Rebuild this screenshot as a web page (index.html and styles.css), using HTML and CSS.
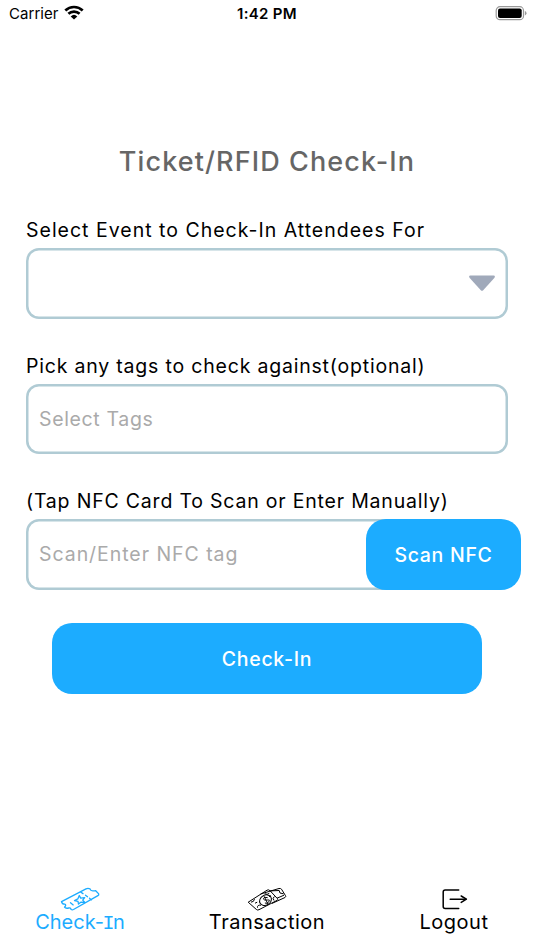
FILE: index.html
```html
<!DOCTYPE html>
<html lang="en">
<head>
<meta charset="utf-8">
<title>Ticket/RFID Check-In</title>
<link rel="stylesheet" href="styles.css">
</head>
<body>
<div class="screen">
  <header class="status">
    <div class="carrier"><span>Carrier</span>
      <svg width="20" height="15" viewBox="0 0 20 15" fill="none" stroke="#000" stroke-width="2.7"><path d="M1.3 5.5a12.6 12.6 0 0 1 17.4 0M4.4 8.8a8.1 8.1 0 0 1 11.2 0"/><path d="M10 14.6 6.7 11.4a4.8 4.8 0 0 1 6.6 0z" fill="#000" stroke="none"/></svg>
    </div>
    <div class="clock">1:42 PM</div>
    <svg class="battery" width="32" height="15" viewBox="0 0 32 15"><rect x="1.2" y=".7" width="27.3" height="13" rx="3.8" fill="none" stroke="#999" stroke-width="1.2"/><rect x="3" y="2.5" width="23.7" height="9.4" rx="2"/><path d="M29.9 5v4.4q1.6-.6 1.6-2.2T29.9 5" fill="#999"/></svg>
  </header>
  <main class="form">
    <h1><span class="title">Ticket/RFID Check-In</span></h1>
    <section class="field">
      <label><span class="l1">Select Event to Check-In Attendees For</span></label>
      <div class="box select"><svg width="28" height="18" viewBox="0 0 28 18"><path d="M2.3 1.5h23.4q2 .4.6 2.4L15.2 16.3q-1.2 1-2.4 0L1.7 3.9Q.3 1.9 2.3 1.5" fill="#a0a9ba"/></svg></div>
    </section>
    <section class="field">
      <label><span class="l2">Pick any tags to check against(optional)</span></label>
      <div class="box"><span class="p1">Select Tags</span></div>
    </section>
    <section class="field">
      <label><span class="l3">(Tap NFC Card To Scan or Enter Manually)</span></label>
      <div class="scan-row">
        <div class="box"><span class="p2">Scan/Enter NFC tag</span></div>
        <button class="scan"><span>Scan NFC</span></button>
      </div>
    </section>
    <button class="submit"><span>Check-In</span></button>
  </main>
  <nav class="tabs">
    <a class="tab active">
      <svg width="40" height="24" viewBox="0 -.7 40 24" fill="none" stroke="currentColor" stroke-width="1.3" stroke-linejoin="round" stroke-linecap="round"><path d="M1.5 14 26 1.2q2-1 4 0 .5 2 2.7 2t3-.2l3 3.2q.4 1-.8 1.7L13.5 21.8q-1.2.6-2.4 0-.5-2-2.4-1.5-3 .8-4.2-.8 2.2-2.2.3-3-2.5.2-3.3-2.5M21 4.5l2 1.4M25.5 7.5l2 1.5M29.5 10.5l2 1.7M10.5 15l2.7 2.2"/><path d="m19.3 7.8 1.4 2.6 4-.4-2 2.4 2 2.2-3.6-.2-2.6 2-.5-2.8-3.5-.7 3.3-1.7z"/></svg>
      <span class="t1">Check-<span class="slab">I</span>n</span>
    </a>
    <a class="tab">
      <svg width="40" height="24" viewBox="0 -.7 40 24" fill="none" stroke="currentColor" stroke-width="1" stroke-linejoin="round"><path d="M1.2 14.5 20 2.5q1.5-1 3 .5l7.5 8q.7 1-.5 1.7L12 22q-1.5.8-2.7-.3z"/><path d="M13.5 6.3 32 .8q1.5-.4 2.5.7l4 6.5q.7 1.2-.5 1.8L25 15.7M23 3.2l9.2-.4.8 2.5 3.5.8M30 10.5l7-3M4 14.5q3-.2 3.5-3M10.5 20q-.4-3 3.5-2.5M17.7 6q2.5 1.5 4.6-.4M27 12.8q-2-2.3.4-4M8 15.5l2.2-1M22 9l2-1"/><ellipse cx="18.5" cy="12.5" rx="6.2" ry="5" transform="rotate(-30 18.5 12.5)"/><path d="m17 8.5 4 8M20.7 10q-4-1.2-4.2.8t4.2 1.5-.8 3.3l-2-.3"/></svg>
      <span class="t2">Transaction</span>
    </a>
    <a class="tab">
      <svg width="40" height="24" viewBox="-.7 -.7 40 24" fill="none" stroke="currentColor" stroke-width="1.5" stroke-linejoin="round" stroke-linecap="round"><path d="M24 2.2H10.5q-2 0-2 2v14.5q0 2 2 2H24M15.5 11.5H31"/><path d="m26.5 8.3 5.2 3.2-5.2 3.2"/></svg>
      <span class="t3">Logout</span>
    </a>
  </nav>
</div>
</body>
</html>
```
FILE: styles.css
```css
* { box-sizing: border-box; }
body { margin: 0; background: #fff; color: #000; font-family: Inter, "Liberation Sans", sans-serif; }
.screen { width: 534px; height: 950px; display: flex; flex-direction: column; overflow: hidden; }
.status { height: 27px; padding: 0 7px 0 9px; display: grid; grid-template-columns: 1fr auto 1fr; align-items: center; font-size: 15px; }
.carrier { display: flex; align-items: center; gap: 5px; letter-spacing: .05px; }
.carrier svg { margin-top: -2px; }
.clock { font-weight: 600; letter-spacing: .3px; margin-right: 2px; }
.battery { justify-self: end; }
.form { padding: 115px 26px 0; display: flex; flex-direction: column; }
h1 { margin: 0 0 34px; height: 40px; line-height: 40px; text-align: center; font-size: 27px; font-weight: 500; color: #666; white-space: nowrap; }
.field { height: 135.5px; }
label { display: block; height: 32px; line-height: 28px; font-size: 19.5px; white-space: nowrap; }
.box { width: 482px; height: 70.5px; box-shadow: inset 0 0 0 2.5px #b0cbd4; border-radius: 13px; padding: 0 13px; display: flex; align-items: center; font-size: 19.5px; color: #aaa; white-space: nowrap; }
.select { justify-content: flex-end; padding-right: 12px; }
.scan-row { display: flex; width: 495px; }
.scan-row .box { flex: none; }
button { border: 0; padding: 0; color: #fff; background: #1cacff; font: 500 19.5px Inter, "Liberation Sans", sans-serif; letter-spacing: .7px; }
.scan { flex: none; width: 155px; height: 71px; border-radius: 20px; margin-left: -142px; }
.submit { width: 430px; height: 70.5px; border-radius: 20px; align-self: center; margin-top: .5px; padding-top: 1px; }
.tabs { margin-top: auto; height: 63px; display: flex; justify-content: space-between; padding: 0 19px; }
.tab { width: 122px; display: flex; flex-direction: column; align-items: center; font-size: 20px; line-height: 22px; white-space: nowrap; }
.tab svg { flex: none; }
.active { color: #1cacff; }
.slab { font-family: "Liberation Mono", monospace; margin: 0 -1.5px; }
.title { letter-spacing: 1.1px; }
.l1 { letter-spacing: 1px; }
.l2, .l3 { letter-spacing: .8px; }
.p1 { letter-spacing: .65px; }
.p2 { letter-spacing: .95px; }
.t2, .t3 { letter-spacing: .5px; }
```
